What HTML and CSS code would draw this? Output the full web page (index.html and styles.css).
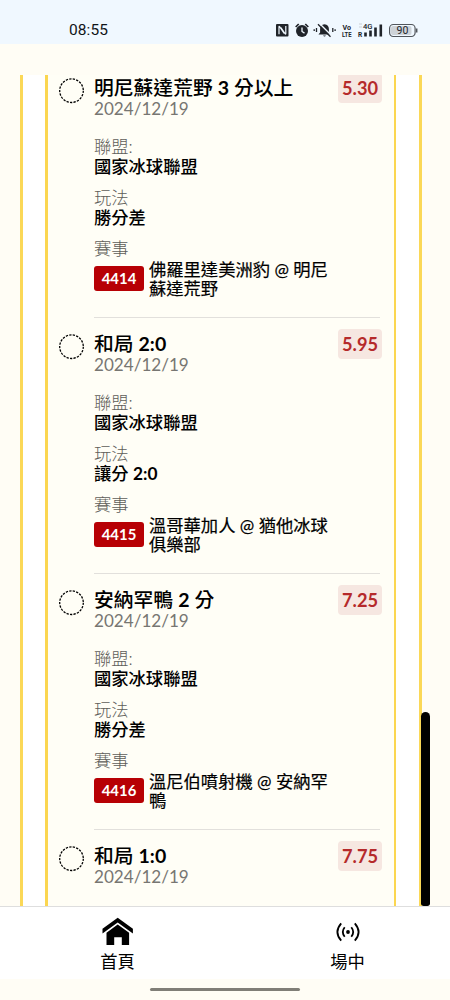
FILE: index.html
```html
<!DOCTYPE html>
<html lang="zh-Hant">
<head>
<meta charset="utf-8">
<title>投注</title>
<link rel="stylesheet" href="styles.css">
</head>
<body>
<header class="status">
  <span class="time">08:55</span>
  <svg class="status-icons" width="144" height="20" viewBox="0 0 144 20">
    <rect x="1" y="4" width="12.5" height="12.5" rx="1" fill="#20242a"/>
    <path d="M4 14.2V7q0-1 .8-.2l4.400 6.700M10.800 6v7.500q0 1-.8.200L5.900 7.500" fill="none" stroke="#f0f8ff" stroke-width="1.2"/>
    <circle cx="27" cy="11" r="6" fill="#20242a"/>
    <path d="M20.700 7l3-3M33.300 7l-3-3" stroke="#20242a" stroke-width="1.7"/>
    <path d="M27 7.500v4l2.500 1.600" fill="none" stroke="#f0f8ff" stroke-width="1.3"/>
    <path d="M43.500 14.500l1.600-2V9q0-4 4.400-4.700 4.400.7 4.400 4.700v3.500l1.600 2zM48 15.500h3q-1.500 2-3 0z" fill="#20242a"/>
    <path d="M44.500 3.500l12.500 12.500" stroke="#f0f8ff" stroke-width="1.500"/>
    <path d="M43 4.200l12.500 12.500M41.500 8v4M39.200 9.300v1.600M57.800 8v4M60.100 9.300v1.600" stroke="#20242a" stroke-width="1.300"/>
    <g fill="#20242a" font-family="Roboto, sans-serif" font-weight="700">
      <text x="67.500" y="9.500" font-size="7.400" textLength="8.500" lengthAdjust="spacingAndGlyphs">Vo</text>
      <text x="67" y="16.500" font-size="7.800" textLength="9.500" lengthAdjust="spacingAndGlyphs">LTE</text>
      <text x="83" y="16.500" font-size="6.500">R</text>
      <text x="88" y="9.300" font-size="8" font-weight="500" textLength="9.500" lengthAdjust="spacingAndGlyphs">4G</text>
    </g>
    <path d="M84 4h3M84 7h3" stroke="#cbd0d5"/>
    <path d="M90.500 12.500v4M95.500 10.500v6M100.500 7.500v9M105.800 4.500v12" stroke="#20242a" stroke-width="2.600"/>
    <rect x="114.600" y="4.500" width="25.500" height="12" rx="3.700" fill="#f0f8ff" stroke="#50555b" stroke-width="1.200"/>
    <rect x="116" y="6" width="20.500" height="9" rx="2" fill="#ced3d8"/>
    <path d="M141.700 8.500v4" stroke="#50555b" stroke-width="1.500"/>
    <text x="121.500" y="14.300" font-family="Roboto, sans-serif" font-size="10.500" fill="#20242a">90</text>
  </svg>
</header>

<main class="view">
  <div class="frame">
    <div class="list">
      <section class="bet">
        <svg class="ring" viewBox="0 0 26 26"><circle cx="12.500" cy="12.700" r="11.800"/></svg>
        <div class="info">
          <div class="head"><h2>明尼蘇達荒野 <b>3</b> 分以上</h2><b class="odds">5.30</b></div>
          <p class="date">2024/12/19</p>
          <dl>
            <dt>聯盟:</dt><dd>國家冰球聯盟</dd>
            <dt>玩法</dt><dd>勝分差</dd>
            <dt>賽事</dt>
          </dl>
          <div class="event"><span class="code">4414</span><span class="teams">佛羅里達美洲豹 @ 明尼<br>蘇達荒野</span></div>
        </div>
      </section>
      <section class="bet">
        <svg class="ring" viewBox="0 0 26 26"><circle cx="12.500" cy="12.700" r="11.800"/></svg>
        <div class="info">
          <div class="head"><h2>和局 <b>2:0</b></h2><b class="odds">5.95</b></div>
          <p class="date">2024/12/19</p>
          <dl>
            <dt>聯盟:</dt><dd>國家冰球聯盟</dd>
            <dt>玩法</dt><dd>讓分 <b>2:0</b></dd>
            <dt>賽事</dt>
          </dl>
          <div class="event"><span class="code">4415</span><span class="teams">溫哥華加人 @ 猶他冰球<br>俱樂部</span></div>
        </div>
      </section>
      <section class="bet">
        <svg class="ring" viewBox="0 0 26 26"><circle cx="12.500" cy="12.700" r="11.800"/></svg>
        <div class="info">
          <div class="head"><h2>安納罕鴨 <b>2</b> 分</h2><b class="odds">7.25</b></div>
          <p class="date">2024/12/19</p>
          <dl>
            <dt>聯盟:</dt><dd>國家冰球聯盟</dd>
            <dt>玩法</dt><dd>勝分差</dd>
            <dt>賽事</dt>
          </dl>
          <div class="event"><span class="code">4416</span><span class="teams">溫尼伯噴射機 @ 安納罕<br>鴨</span></div>
        </div>
      </section>
      <section class="bet">
        <svg class="ring" viewBox="0 0 26 26"><circle cx="12.500" cy="12.700" r="11.800"/></svg>
        <div class="info">
          <div class="head"><h2>和局 <b>1:0</b></h2><b class="odds">7.75</b></div>
          <p class="date">2024/12/19</p>
        </div>
      </section>
    </div>
  </div>
  <div class="scrollbar"></div>
</main>

<nav class="tabs">
  <a class="tab home">
    <svg width="32" height="30" viewBox="0 0 32 30">
      <path d="M.5 11.800L15.700.8l15.200 11v4.700L15.700 5.600.5 16.500z"/>
      <path d="M4.500 15.700L15.700 7.600l11.400 8.100V28h-7.300v-7.800h-7.600V28H4.500z"/>
    </svg>
    <span>首頁</span>
  </a>
  <a class="tab live">
    <svg width="24" height="30" viewBox="0 0 24 30" fill="none" stroke="#000" stroke-width="1.800">
      <circle cx="12" cy="15" r="1.900" fill="#000" stroke="none"/>
      <path d="M8.700 10.300Q4.900 15 8.700 19.700M15.300 10.300q3.800 4.700 0 9.400M5.200 6.300q-7.600 8.700 0 17.400M18.800 6.300q7.600 8.700 0 17.400"/>
    </svg>
    <span>場中</span>
  </a>
</nav>
<footer class="gesture"><div class="handle"></div></footer>
</body>
</html>
```
FILE: styles.css
```css
* { box-sizing: border-box; margin: 0; padding: 0; }
body {
  width: 450px;
  height: 1000px;
  display: flex;
  flex-direction: column;
  overflow: hidden;
  background: #fffdf5;
  color: #000;
  font-family: Lato, "Noto Sans CJK TC", sans-serif;
}
.status {
  height: 44px;
  flex: none;
  display: flex;
  align-items: flex-start;
  justify-content: space-between;
  padding: 20px 31px 0 69px;
  background: #f0f8ff;
}
.time { font: 400 15.5px/21px Roboto, sans-serif; color: #101418; letter-spacing: .1px; }
.view {
  position: relative;
  height: 831px;
  flex: none;
  margin-top: 31px;
  padding: 0 28px 0 20px;
  overflow: hidden;
}
.frame {
  height: 831px;
  padding: 0 23px 0 22px;
  background: #fff;
  border: solid #fbd857;
  border-width: 0 3px;
}
.list {
  height: 831px;
  padding: 0 14px 0 11px;
  overflow: hidden;
  background: #fffef6;
  border: solid #fbd650;
  border-width: 0 2px 0 3px;
}
.bet { display: flex; gap: 9px; height: 256px; }
.bet:first-child { margin-top: -13px; }
.ring {
  flex: none;
  width: 26px;
  height: 26px;
  margin-top: 16px;
  fill: none;
  stroke: #000;
  stroke-width: 1.3;
  stroke-dasharray: 2.3 1.230;
}
.info {
  flex: 1;
  padding-top: 15px;
  border-bottom: 1px solid #e2e0dc;
}
.head { display: flex; justify-content: space-between; height: 21px; }
h2 { font-size: 19.8px; line-height: 21px; font-weight: 500; white-space: nowrap; }
h2 b { font-size: 19.500px; }
.odds {
  flex: none;
  width: 44px;
  height: 30px;
  margin: -4px -2px 0 0;
  border-radius: 4px;
  background: #f6e7e1;
  color: #b52a2b;
  font-size: 18.200px;
  line-height: 30px;
  text-align: center;
}
.date { font-size: 17.100px; line-height: 21px; color: #777672; }
dl { margin-top: 18px; font-size: 17.300px; line-height: 20px; }
dt { height: 20px; color: #5e5d59; font-weight: 300; }
dd { height: 20px; font-weight: 500; margin-bottom: 11px; }
.event { display: flex; align-items: center; gap: 5px; height: 38px; margin-top: 1px; }
.code {
  flex: none;
  width: 50px;
  height: 25px;
  margin-bottom: 2px;
  border-radius: 3px;
  background: #b70004;
  color: #fff;
  font-size: 14.900px;
  font-weight: 700;
  line-height: 25px;
  text-align: center;
}
.teams {
  font-size: 17.300px;
  line-height: 19px;
  font-weight: 400;
  white-space: nowrap;
  -webkit-text-stroke: .2px #000;
}
.scrollbar {
  position: absolute;
  top: 637px;
  left: 421px;
  width: 9px;
  height: 194px;
  border-radius: 5px 5px 3px 3px;
  background: #000;
}
.tabs {
  height: 73px;
  flex: none;
  display: flex;
  border-top: 1px solid #dedede;
  background: #fff;
}
.tab {
  flex: none;
  display: flex;
  flex-direction: column;
  align-items: center;
  padding-top: 10px;
  font-size: 17.300px;
  line-height: 29px;
}
.home { width: 235px; }
.live { width: 215px; padding-left: 10px; }
.gesture { padding: 9px 150px; }
.handle { height: 3px; border-radius: 2px; background: #807e77; }
```
